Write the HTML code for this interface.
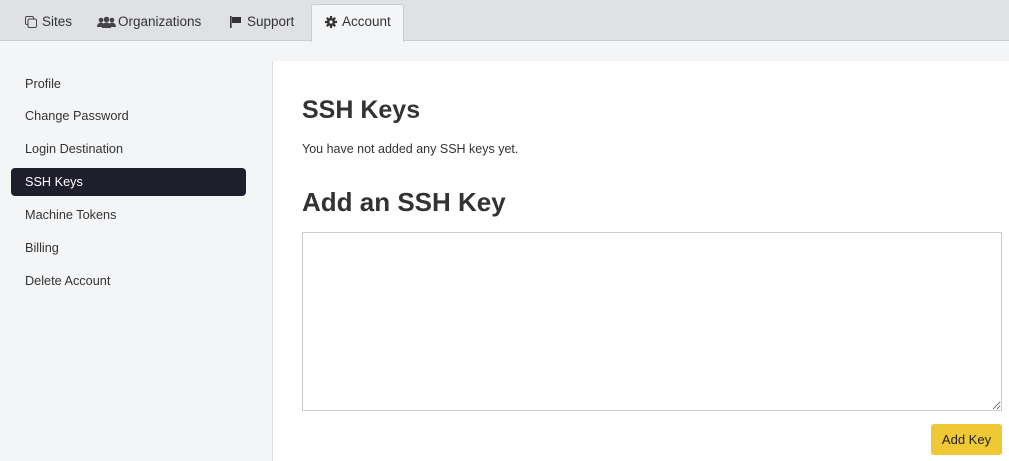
<!DOCTYPE html>
<html><head><style>
body{margin:0;width:1009px;height:461px;overflow:hidden;background:#f4f5f7;font-family:"Liberation Sans",sans-serif;color:#333;position:relative}
.top{position:absolute;left:0;top:0;width:1009px;height:40px;background:#dfe1e4;border-bottom:1px solid #ccc}
.tab{position:absolute;top:14px;font-size:13.5px;color:#333;display:flex;align-items:center;gap:5px}
.acc{position:absolute;left:311px;top:4px;width:91px;height:37px;background:#f4f5f7;border:1px solid #ccc;border-bottom:none;border-radius:3px 3px 0 0}
.side a{position:absolute;left:25px;font-size:12.7px;color:#333}
.sel{position:absolute;left:11px;top:168px;width:235px;height:28px;background:#1f1e2c;border-radius:4px}
.main{position:absolute;left:272px;top:61px;width:737px;height:400px;background:#fff;border-left:1px solid #ddd}
h1,h2{margin:0;position:absolute;left:29px;font-weight:bold;color:#333}
textarea{position:absolute;left:29px;top:171px;width:700px;height:179px;border:1px solid #ccc;box-sizing:border-box;margin:0}
.btn{position:absolute;left:658px;top:363px;width:71px;height:31px;background:#eec935;border-radius:3px;font-size:13px;display:flex;align-items:center;justify-content:center;color:#222}
</style></head><body>
<div class="top"></div>
<div class="acc"></div>
<div class="tab" style="left:25px"><svg width="12" height="12" viewBox="0 0 12 12"><rect x="0.5" y="0.5" width="8" height="8" rx="1.5" fill="none" stroke="#444"/><rect x="3" y="3" width="8.5" height="8.5" rx="1.5" fill="#dfe1e4" stroke="#444"/></svg>Sites</div>
<div class="tab" style="left:97px;gap:2px"><svg width="19" height="12" viewBox="0 0 19 12"><circle cx="4" cy="4" r="2.3" fill="#444"/><circle cx="15" cy="4" r="2.3" fill="#444"/><circle cx="9.5" cy="3.5" r="2.8" fill="#444"/><path d="M0 11c0-3 2-4.5 4-4.5s4 1.5 4 4.5zM11 11c0-3 2-4.5 4-4.5s4 1.5 4 4.5zM5 12c0-3.5 2-5.5 4.5-5.5s4.5 2 4.5 5.5z" fill="#444"/></svg>Organizations</div>
<div class="tab" style="left:230px"><svg width="12" height="12" viewBox="0 0 12 12"><rect x="0" y="0" width="1.6" height="12" fill="#333"/><path d="M2 1h9v6H2z" fill="#333"/></svg>Support</div>
<div class="tab" style="left:325px"><svg width="12" height="12" viewBox="0 0 12 12"><circle cx="6" cy="6" r="4" fill="#333"/><g stroke="#333" stroke-width="2.2"><path d="M6 0v12M0 6h12M1.8 1.8l8.4 8.4M10.2 1.8l-8.4 8.4"/></g><circle cx="6" cy="6" r="1.6" fill="#f4f5f7"/></svg>Account</div>
<div class="side">
<a style="top:77px">Profile</a>
<a style="top:109px">Change Password</a>
<a style="top:142px">Login Destination</a>
<div class="sel"></div>
<a style="top:175px;color:#fff">SSH Keys</a>
<a style="top:208px">Machine Tokens</a>
<a style="top:241px">Billing</a>
<a style="top:274px">Delete Account</a>
</div>
<div class="main">
<h1 style="top:35px;font-size:25px">SSH Keys</h1>
<div style="position:absolute;left:29px;top:81px;font-size:12.5px">You have not added any SSH keys yet.</div>
<h2 style="top:126px;font-size:26px">Add an SSH Key</h2>
<textarea></textarea>
<div class="btn">Add Key</div>
</div>
</body></html>
